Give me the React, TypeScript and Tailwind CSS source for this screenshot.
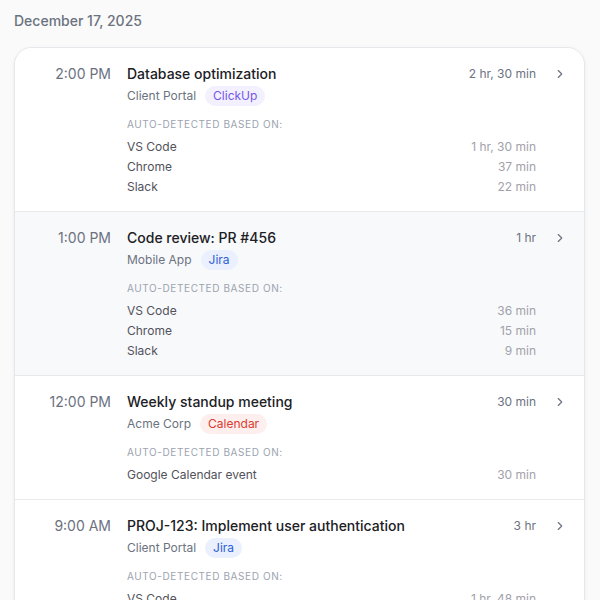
import React from 'react';
import { ChevronRight } from 'lucide-react';

type Source = { name: string; time: string };
type Entry = {
  time: string;
  title: string;
  client: string;
  tag: 'ClickUp' | 'Jira' | 'Calendar';
  duration: string;
  sources: Source[];
  active?: boolean;
};

const tagClasses: Record<Entry['tag'], string> = {
  ClickUp: 'bg-[#f3f0ff] text-[#7457e6]',
  Jira: 'bg-[#eaf0fd] text-[#2f5fd8]',
  Calendar: 'bg-[#fdefee] text-[#dc3a30]',
};

const entries: Entry[] = [
  {
    time: '2:00 PM',
    title: 'Database optimization',
    client: 'Client Portal',
    tag: 'ClickUp',
    duration: '2 hr, 30 min',
    sources: [
      { name: 'VS Code', time: '1 hr, 30 min' },
      { name: 'Chrome', time: '37 min' },
      { name: 'Slack', time: '22 min' },
    ],
  },
  {
    time: '1:00 PM',
    title: 'Code review: PR #456',
    client: 'Mobile App',
    tag: 'Jira',
    duration: '1 hr',
    active: true,
    sources: [
      { name: 'VS Code', time: '36 min' },
      { name: 'Chrome', time: '15 min' },
      { name: 'Slack', time: '9 min' },
    ],
  },
  {
    time: '12:00 PM',
    title: 'Weekly standup meeting',
    client: 'Acme Corp',
    tag: 'Calendar',
    duration: '30 min',
    sources: [{ name: 'Google Calendar event', time: '30 min' }],
  },
  {
    time: '9:00 AM',
    title: 'PROJ-123: Implement user authentication',
    client: 'Client Portal',
    tag: 'Jira',
    duration: '3 hr',
    sources: [
      { name: 'VS Code', time: '1 hr, 48 min' },
      { name: 'Chrome', time: '52 min' },
      { name: 'Slack', time: '20 min' },
    ],
  },
];

const EntryRow: React.FC<{ entry: Entry; last: boolean }> = ({ entry, last }) => (
  <div
    className={`flex pt-[15px] pb-[14px] ${entry.active ? 'bg-[#f8f9fb]' : 'bg-white'} ${
      last ? '' : 'border-b border-[#e8e9ec]'
    }`}
  >
    <div className="w-[96px] shrink-0 text-right text-[14px] leading-[22px] text-[#6b7280]">
      {entry.time}
    </div>
    <div className="ml-4 flex-1 min-w-0">
      <div className="flex items-center justify-between">
        <span className="text-[14px] leading-[22px] font-medium text-[#202024]">{entry.title}</span>
        <span className="text-[12px] leading-[22px] text-[#6b7280]">{entry.duration}</span>
      </div>
      <div className="mt-[1px] flex items-center gap-[9px]">
        <span className="text-[12px] leading-[20px] text-[#6b7280]">{entry.client}</span>
        <span className={`rounded-full px-2 text-[12px] leading-[20px] ${tagClasses[entry.tag]}`}>
          {entry.tag}
        </span>
      </div>
      <div className="mt-3 text-[10px] leading-[12px] tracking-[0.06em] uppercase text-[#9ca3af]">
        Auto-detected based on:
      </div>
      <div className="mt-[7px]">
        {entry.sources.map((s) => (
          <div key={s.name} className="flex items-center justify-between h-5 text-[12px]">
            <span className="text-[#52525b]">{s.name}</span>
            <span className="text-[#a1a1aa]">{s.time}</span>
          </div>
        ))}
      </div>
    </div>
    <div className="w-[48px] shrink-0 flex justify-center h-[22px] items-center pr-[1px]">
      <ChevronRight size={14} strokeWidth={2} className="text-[#6b7280]" />
    </div>
  </div>
);

export default function App() {
  return (
    <div
      className="min-h-screen bg-[#fafafa] px-[14px] pt-[11px] overflow-hidden"
      style={{ fontFamily: 'Inter, "Noto Sans", sans-serif' }}
    >
      <div className="text-[14px] leading-[20px] font-medium text-[#6b7280]">December 17, 2025</div>
      <div className="mt-4 w-[571px] rounded-t-[18px] border border-[#e5e7eb] bg-white overflow-hidden shadow-[0_1px_4px_rgba(0,0,0,0.06)]">
        {entries.map((e, i) => (
          <EntryRow key={e.time} entry={e} last={i === entries.length - 1} />
        ))}
      </div>
    </div>
  );
}
